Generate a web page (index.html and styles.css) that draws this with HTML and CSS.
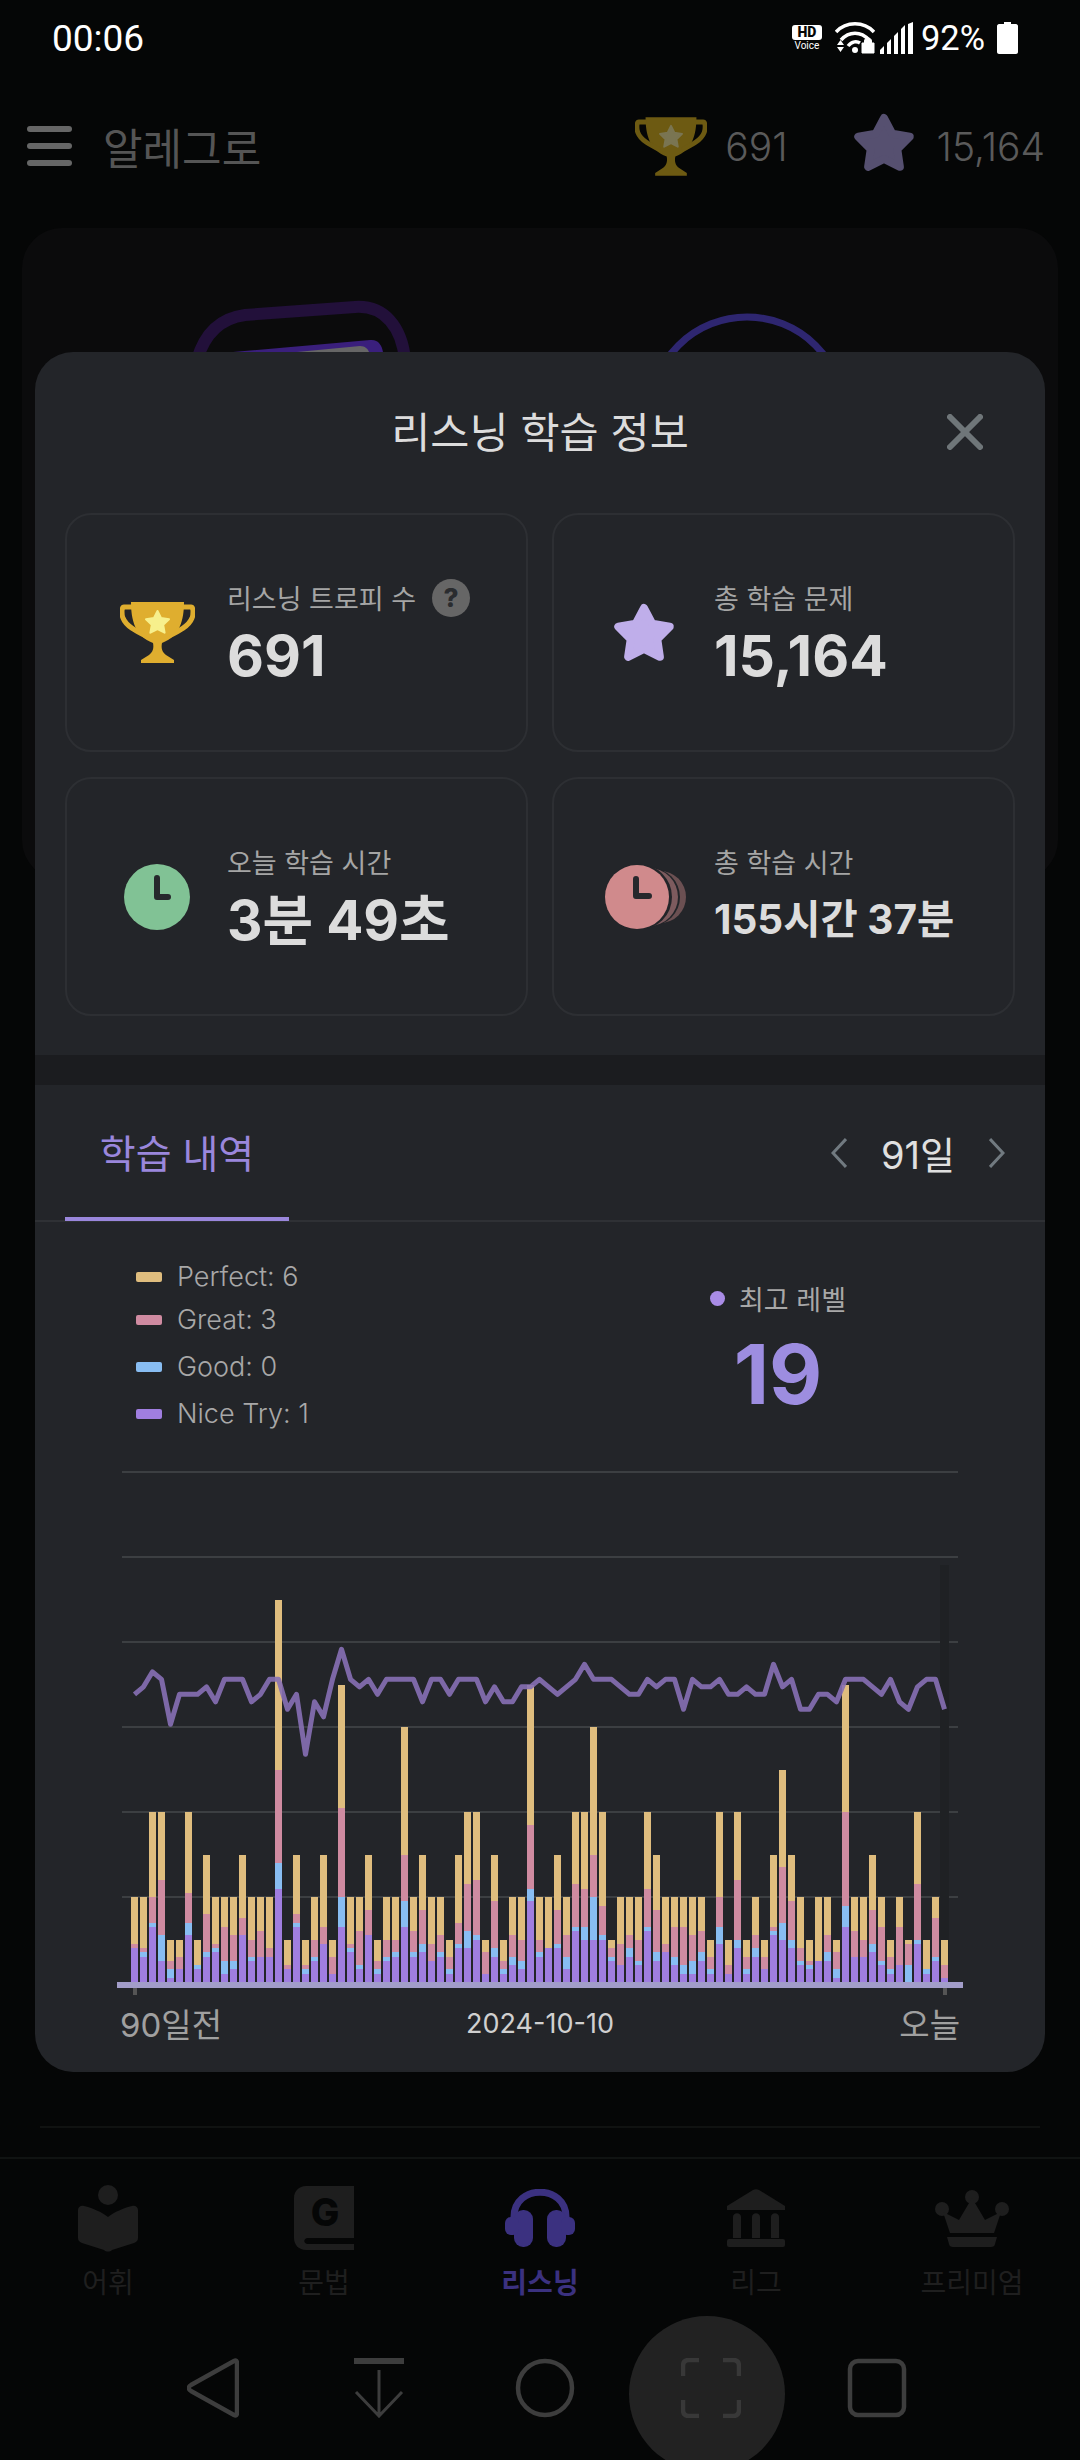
FILE: index.html
```html
<!DOCTYPE html>
<html lang="ko">
<head>
  <meta charset="UTF-8">
  <title>알레그로</title>
  <link rel="stylesheet" href="styles.css">
</head>
<body>
  <svg class="defs">
    <symbol id="trophy" viewBox="0 0 75 61">
      <path class="cup" d="M11 0H64C64 18 60 34 42 41C41 46 42 50 46 53L54 58V61H21V58L29 53C33 50 34 46 33 41C15 34 11 18 11 0Z"/>
      <path class="cup-handle" d="M12 5H4C1 5 2 14 3 16C6 24 16 29 26 34M63 5H71C74 5 73 14 72 16C69 24 59 29 49 34"/>
      <polygon class="cup-star" points="37.5,9 41,16 49,17.300 43.200,22.900 44.600,30.700 37.5,27 30.400,30.700 31.800,22.900 26,17.300 34,16"/>
    </symbol>
    <symbol id="star" viewBox="0 0 64 62">
      <polygon points="32,6 40.2,21.7 57.7,24.7 45.3,37.3 47.9,54.8 32,47 16.1,54.8 18.700,37.3 6.3,24.7 23.8,21.700"/>
    </symbol>
  </svg>

  <div class="page">
    <div class="status-bar">
      <span class="clock">00:06</span>
      <div class="status-icons">
        <div class="hd">
          <span class="hd-box">HD</span>
          <span class="hd-voice">Voice</span>
        </div>
        <svg class="wifi" width="40" height="32" viewBox="0 0 40 32">
          <path d="M1 10C11 -1 29 -1 39 10M6 18C14 9 26 9 34 18M13 24C17 19 22 19 25 21" fill="none" stroke="#fff" stroke-width="3.500"/>
          <circle cx="20" cy="28" r="3" fill="#fff"/>
          <path d="M2 23L5.500 18L9 23ZM2 25H9L5.500 30Z" fill="#fff"/>
          <path d="M27 21H39V31H27ZM29.500 21V19C29.500 15 36.500 15 36.500 19V21" fill="#fff" stroke="#fff"/>
        </svg>
        <svg class="signal" width="33" height="32" viewBox="0 0 33 32">
          <path d="M0 32V28L4 24V32ZM7 32V21L11 17V32ZM14 32V14L18 10V32ZM21 32V7L25 3V32ZM28 32V2L33 0V32Z" fill="#fff"/>
        </svg>
        <span class="battery-text">92%</span>
        <svg class="battery" width="21" height="32" viewBox="0 0 21 32">
          <path d="M7 0H14V2H19C20 2 21 3 21 4V30C21 31 20 32 19 32H2C1 32 0 31 0 30V4C0 3 1 2 2 2H7Z" fill="#fff"/>
        </svg>
      </div>
    </div>

    <div class="app-header">
      <div class="menu-icon"><span></span><span></span><span></span></div>
      <span class="app-title">알레그로</span>
      <svg class="head-trophy"><use href="#trophy"/></svg>
      <span class="head-num">691</span>
      <svg class="head-star"><use href="#star"/></svg>
      <span class="head-num">15,164</span>
    </div>

    <div class="back-card">
      <svg width="1036" height="652" viewBox="22 228 1036 652">
        <path d="M197 360C205 332 222 318 245 315L355 307C385 305 402 328 405 360" fill="none" stroke="#22103a" stroke-width="12"/>
        <path d="M233 352L370 340C378 339 382 345 383 352Z" fill="#3a1f7c"/>
        <path d="M297 352L360 346C365 346 368 349 369 352Z" fill="#666"/>
        <circle cx="747" cy="414" r="97" fill="none" stroke="#2e2670" stroke-width="7"/>
      </svg>
    </div>

    <div class="spacer"></div>
    <div class="back-line"></div>

    <div class="tab-bar">
      <div class="tab-item">
        <div class="tab-icon">
          <svg width="60" height="67" viewBox="0 0 60 67">
            <circle cx="30" cy="10" r="10"/>
            <path d="M0 25C0 22 3 20 6 21C14 23 24 27 30 32C36 27 46 23 54 21C57 20 60 22 60 25V53C60 56 58 57 56 58L34 65C32 67 28 67 26 65L4 58C2 57 0 56 0 53Z"/>
          </svg>
        </div>
        <span>어휘</span>
      </div>
      <div class="tab-item">
        <div class="tab-icon">
          <svg width="60" height="64" viewBox="0 0 60 64">
            <path d="M12 0H60V52H14C9 52 9 58 14 58H60V64H12C5 64 0 59 0 52V12C0 5 5 0 12 0Z"/>
            <text class="book-letter" x="31" y="40">G</text>
          </svg>
        </div>
        <span>문법</span>
      </div>
      <div class="tab-item active">
        <div class="tab-icon">
          <svg width="70" height="58" viewBox="0 0 70 58">
            <path class="phone-band" d="M9 36V28C9 -5 61 -5 61 28V36"/>
            <rect x="9" y="21" width="19" height="37" rx="9"/>
            <rect x="0" y="28" width="14" height="18" rx="6"/>
            <rect x="42" y="21" width="19" height="37" rx="9"/>
            <rect x="56" y="28" width="14" height="18" rx="6"/>
          </svg>
        </div>
        <span>리스닝</span>
      </div>
      <div class="tab-item">
        <div class="tab-icon">
          <svg width="58" height="58" viewBox="0 0 58 58">
            <path d="M26 1C28 0 30 0 32 1L58 17V21H0V17Z"/>
            <path d="M6 49V28C6 23 14 23 14 28V49ZM25 49V28C25 23 33 23 33 28V49ZM44 49V28C44 23 52 23 52 28V49Z"/>
            <rect x="0" y="50" width="58" height="8" rx="2"/>
          </svg>
        </div>
        <span>리그</span>
      </div>
      <div class="tab-item">
        <div class="tab-icon">
          <svg width="74" height="57" viewBox="0 0 74 57">
            <circle cx="7" cy="19" r="7"/>
            <circle cx="37" cy="7" r="7"/>
            <circle cx="67" cy="19" r="7"/>
            <path d="M8 22L24 30L37 8L50 30L66 22L59 43H15Z"/>
            <path d="M12 47H62L60 54C60 56 58 57 56 57H18C16 57 14 56 14 54Z"/>
          </svg>
        </div>
        <span>프리미엄</span>
      </div>
    </div>

    <div class="sys-nav">
      <div class="sys-btn">
        <svg width="52" height="60" viewBox="0 0 52 60">
          <path d="M47 3C49 2 50 3 50 5V55C50 57 49 58 47 57L4 33C1 31 1 29 4 27Z"/>
        </svg>
      </div>
      <div class="sys-btn">
        <svg width="50" height="60" viewBox="0 0 50 60">
          <path class="thick" d="M0 3H50"/>
          <path class="thin" d="M25 12V58M2 34L25 58L48 34"/>
        </svg>
      </div>
      <div class="sys-btn">
        <svg width="60" height="60" viewBox="0 0 60 60">
          <circle cx="30" cy="30" r="27"/>
        </svg>
      </div>
      <div class="sys-btn capture">
        <div class="capture-bg"></div>
        <svg width="60" height="60" viewBox="0 0 60 60">
          <path d="M18 2H8C4 2 2 4 2 8V18M42 2H52C56 2 58 4 58 8V18M18 58H8C4 58 2 56 2 52V42M42 58H52C56 58 58 56 58 52V42"/>
        </svg>
      </div>
      <div class="sys-btn">
        <svg width="60" height="60" viewBox="0 0 60 60">
          <rect x="3" y="3" width="54" height="54" rx="8"/>
        </svg>
      </div>
    </div>

    <div class="modal">
      <div class="modal-head">
        <span class="modal-title">리스닝 학습 정보</span>
        <svg class="modal-close" width="36" height="36" viewBox="0 0 36 36">
          <path d="M3 3L33 33M33 3L3 33"/>
        </svg>
      </div>

      <div class="stat-grid">
        <div class="stat-card">
          <div class="stat-icon"><svg class="card-trophy"><use href="#trophy"/></svg></div>
          <div class="stat-text">
            <div class="stat-label">리스닝 트로피 수<span class="help">?</span></div>
            <div class="stat-value">691</div>
          </div>
        </div>
        <div class="stat-card">
          <div class="stat-icon"><svg class="card-star"><use href="#star"/></svg></div>
          <div class="stat-text">
            <div class="stat-label">총 학습 문제</div>
            <div class="stat-value">15,164</div>
          </div>
        </div>
        <div class="stat-card">
          <div class="stat-icon">
            <svg width="66" height="66" viewBox="0 0 66 66">
              <circle cx="33" cy="33" r="33" fill="#81c295"/>
              <path class="clock-hand" d="M33 14V33H44"/>
            </svg>
          </div>
          <div class="stat-text">
            <div class="stat-label">오늘 학습 시간</div>
            <div class="stat-value mid">3분 49초</div>
          </div>
        </div>
        <div class="stat-card">
          <div class="stat-icon">
            <svg class="clock-stack" width="82" height="64" viewBox="0 0 82 64">
              <circle cx="55" cy="32" r="26" fill="#6b5052"/>
              <circle cx="46" cy="32" r="29" fill="#232529"/>
              <circle cx="44" cy="32" r="29" fill="#7d5b5e"/>
              <circle cx="34" cy="32" r="33" fill="#232529"/>
              <circle cx="32" cy="32" r="32" fill="#d08a8c"/>
              <path class="clock-hand" d="M31 14V31H44"/>
            </svg>
          </div>
          <div class="stat-text">
            <div class="stat-label">총 학습 시간</div>
            <div class="stat-value small">155시간 37분</div>
          </div>
        </div>
      </div>

      <div class="band"></div>

      <div class="tabs">
        <div class="tab-title">학습 내역</div>
        <div class="pager">
          <svg width="16" height="30" viewBox="0 0 16 30"><path d="M15 1L2 15L15 29"/></svg>
          <span>91일</span>
          <svg width="16" height="30" viewBox="0 0 16 30"><path d="M1 1L14 15L1 29"/></svg>
        </div>
      </div>

      <div class="stats">
        <div class="legend">
          <div class="legend-row"><i class="swatch perfect"></i>Perfect: 6</div>
          <div class="legend-row"><i class="swatch great"></i>Great: 3</div>
          <div class="legend-row"><i class="swatch good"></i>Good: 0</div>
          <div class="legend-row"><i class="swatch nice"></i>Nice Try: 1</div>
        </div>
        <div class="best">
          <div class="best-label"><i class="best-dot"></i>최고 레벨</div>
          <div class="best-value">19</div>
        </div>
      </div>

      <svg id="chart" class="chart" width="1010" height="545" viewBox="35 1460 1010 545"></svg>

      <div class="axis">
        <span class="axis-side">90일전</span>
        <span class="axis-date">2024-10-10</span>
        <span class="axis-side right">오늘</span>
      </div>
    </div>
  </div>

  <script src="chart.js"></script>
</body>
</html>
```

FILE: styles.css
```css
* {
  box-sizing: border-box;
}

body {
  margin: 0;
  width: 1080px;
  height: 2460px;
  overflow: hidden;
  background: #050606;
  font-family: Inter, "Noto Sans CJK KR", sans-serif;
}

.defs {
  display: none;
}

.page {
  position: relative;
  width: 1080px;
  height: 2460px;
  overflow: hidden;
  display: flex;
  flex-direction: column;
}

/* status bar */
.status-bar {
  height: 76px;
  flex: none;
  display: flex;
  align-items: center;
  justify-content: space-between;
  padding: 0 62px 0 52px;
  color: #fff;
  font-family: Roboto, sans-serif;
}

.clock {
  font-size: 37px;
}

.status-icons {
  display: flex;
  align-items: center;
}

.hd {
  width: 30px;
  margin-right: 13px;
  display: flex;
  flex-direction: column;
  align-items: center;
}

.hd-box {
  width: 30px;
  height: 15px;
  background: #fff;
  border-radius: 3px;
  color: #050606;
  font-size: 14px;
  line-height: 15px;
  font-weight: 900;
  text-align: center;
}

.hd-voice {
  font-size: 10px;
  line-height: 12px;
}

.wifi {
  margin-right: 5px;
}

.battery-text {
  font-size: 34.5px;
  margin: 0 12px 0 8px;
}

/* header behind the dialog */
.app-header {
  height: 140px;
  flex: none;
  display: flex;
  align-items: center;
  padding: 0 35px 0 27px;
  color: #5a5a5a;
}

.menu-icon {
  width: 45px;
  display: flex;
  flex-direction: column;
  gap: 11px;
  margin-right: 31px;
}

.menu-icon span {
  height: 6px;
  border-radius: 3px;
  background: #666;
}

.app-title {
  font-size: 43px;
  margin-right: auto;
  color: #555;
}

.head-trophy {
  width: 72px;
  height: 59px;
  margin-right: 18px;
  --cup: #6d5a12;
  --cup-star: #7a7552;
}

.head-star {
  width: 64px;
  height: 62px;
  margin: -6px 21px 0 64px;
  fill: #565070;
  stroke: #565070;
  stroke-width: 8;
  stroke-linejoin: round;
}

.head-num {
  font-size: 39px;
  font-weight: 300;
}

.cup {
  fill: var(--cup);
}

.cup-handle {
  fill: none;
  stroke: var(--cup);
  stroke-width: 5;
}

.cup-star {
  fill: var(--cup-star);
  stroke: var(--cup-star);
  stroke-width: 2;
  stroke-linejoin: round;
}

.back-card {
  height: 652px;
  flex: none;
  margin: 12px 22px 0;
  background: #0b0b0c;
  border-radius: 40px;
  overflow: hidden;
}

.back-card svg {
  display: block;
}

.spacer {
  flex: 1;
}

.back-line {
  height: 2px;
  flex: none;
  margin: 0 40px 29px;
  background: #101211;
}

/* bottom tabs */
.tab-bar {
  height: 201px;
  flex: none;
  display: grid;
  grid-template-columns: repeat(5, 216px);
  padding-top: 25px;
  border-top: 2px solid #101312;
}

.tab-item {
  display: flex;
  flex-direction: column;
  align-items: center;
  color: #1f1f1f;
  font-size: 28px;
  line-height: 40px;
  fill: #1e1e1e;
}

.tab-item.active {
  color: #3b3180;
  fill: #3b3180;
  font-weight: 700;
}

.tab-icon {
  height: 68px;
  margin-bottom: 11px;
  display: flex;
  align-items: center;
}

.book-letter {
  font-family: Inter, sans-serif;
  font-size: 38px;
  font-weight: 800;
  text-anchor: middle;
  fill: #050606;
}

.phone-band {
  fill: none;
  stroke: #3b3180;
  stroke-width: 7;
}

/* system navigation */
.sys-nav {
  height: 102px;
  flex: none;
  display: flex;
  justify-content: center;
  padding-left: 10px;
}

.sys-btn {
  position: relative;
  width: 166px;
  height: 60px;
  display: flex;
  justify-content: center;
}

.sys-btn svg {
  position: relative;
  fill: none;
  stroke: #3d3d3d;
  stroke-width: 4.5;
}

.sys-btn .thick {
  stroke-width: 6;
}

.sys-btn .thin {
  stroke-width: 3;
}

.capture svg {
  stroke: #383838;
}

.capture-bg {
  position: absolute;
  left: 1px;
  top: -42px;
  width: 156px;
  height: 156px;
  border-radius: 50%;
  background: #222;
}

/* dialog */
.modal {
  position: absolute;
  left: 35px;
  top: 352px;
  width: 1010px;
  height: 1720px;
  background: #232529;
  border-radius: 38px;
  overflow: hidden;
}

.modal-head {
  position: relative;
  height: 161px;
  padding-bottom: 7px;
  display: flex;
  align-items: center;
  justify-content: center;
}

.modal-title {
  font-size: 42.5px;
  color: #dcdcdc;
}

.modal-close {
  position: absolute;
  right: 62px;
  top: 62px;
  fill: none;
  stroke: #6f7679;
  stroke-width: 6;
  stroke-linecap: round;
}

.stat-grid {
  display: grid;
  grid-template-columns: 463px 463px;
  grid-auto-rows: 239px;
  column-gap: 24px;
  row-gap: 25px;
  padding: 0 30px;
}

.stat-card {
  display: flex;
  align-items: center;
  border: 2px solid #2d2f33;
  border-radius: 26px;
  padding-left: 24px;
}

.stat-icon {
  width: 132px;
  margin-right: 4px;
  display: flex;
  justify-content: center;
}

.card-trophy {
  width: 75px;
  height: 61px;
  --cup: #dfae2f;
  --cup-star: #f7f08c;
}

.card-star {
  width: 64px;
  height: 62px;
  fill: #bfaeea;
  stroke: #bfaeea;
  stroke-width: 8;
  stroke-linejoin: round;
}

.clock-hand {
  fill: none;
  stroke: #26282c;
  stroke-width: 6;
  stroke-linecap: round;
  stroke-linejoin: round;
}

.clock-stack {
  margin-left: 4px;
}

.stat-label {
  display: flex;
  align-items: center;
  height: 40px;
  font-size: 27px;
  color: #a5a5a5;
}

.help {
  width: 38px;
  height: 38px;
  margin-left: 16px;
  border-radius: 50%;
  background: #666;
  color: #2a2c2f;
  font-size: 26px;
  font-weight: 800;
  line-height: 38px;
  text-align: center;
}

.stat-value {
  height: 64px;
  margin-top: 6px;
  font-size: 57px;
  line-height: 64px;
  font-weight: 700;
  color: #dcdcdc;
  white-space: nowrap;
}

.stat-value.mid {
  font-size: 55px;
}

.stat-value.small {
  font-size: 40.5px;
}

.band {
  height: 30px;
  margin-top: 39px;
  background: #1b1c1f;
}

.tabs {
  position: relative;
  height: 137px;
  display: flex;
  align-items: center;
  border-bottom: 2px solid #2f3135;
}

.tab-title {
  width: 224px;
  height: 137px;
  margin-left: 30px;
  font-size: 39px;
  line-height: 139px;
  text-align: center;
  color: #9a87dc;
  border-bottom: 4px solid #9a87dc;
}

.pager {
  margin-left: auto;
  padding-right: 40px;
  display: flex;
  align-items: center;
  gap: 34px;
  font-size: 38px;
  color: #e0e0e0;
}

.pager svg {
  fill: none;
  stroke: #717a80;
  stroke-width: 3;
}

.stats {
  height: 238px;
  display: flex;
  padding: 31px 0 0 101px;
}

.legend {
  width: 574px;
}

.legend-row {
  height: 47px;
  display: flex;
  align-items: center;
  font-size: 27px;
  font-weight: 300;
  color: #a8a8a8;
}

.legend-row:first-child {
  margin-bottom: -4px;
}

.swatch {
  width: 26px;
  height: 10px;
  margin-right: 15px;
  border-radius: 2px;
}

.perfect {
  background: #dfbd7e;
}

.great {
  background: #cf8ba1;
}

.good {
  background: #88bdf2;
}

.nice {
  background: #a07ee0;
}

.best {
  width: 136px;
  padding-top: 25px;
  display: flex;
  flex-direction: column;
  align-items: center;
}

.best-label {
  height: 40px;
  display: flex;
  align-items: center;
  white-space: nowrap;
  font-size: 27px;
  color: #a8a8a8;
}

.best-dot {
  width: 15px;
  height: 15px;
  margin-right: 14px;
  border-radius: 50%;
  background: #a98ce6;
}

.best-value {
  margin-top: 12px;
  font-size: 82px;
  line-height: 90px;
  font-weight: 700;
  color: #9d8de0;
}

.chart {
  display: block;
}

.axis {
  display: grid;
  grid-template-columns: 1fr auto 1fr;
  align-items: center;
  height: 35px;
  margin-top: -6px;
  padding: 0 85px;
}

.axis-side {
  font-size: 33px;
  color: #a0a0a0;
}

.axis-side.right {
  text-align: right;
}

.axis-date {
  font-size: 27px;
  color: #d0d0d0;
}
```

FILE: chart.js
```js
// [nice try, good, great, perfect] per day
var days = [
  [8,0,1,11],[6,1,1,12],[13,1,6,20],[5,6,13,16],[1,2,2,5],[3,0,3,4],[11,3,7,19],[3,1,0,6],
  [6,1,9,14],[7,1,1,11],[2,3,8,7],[3,2,6,9],[11,0,4,15],[5,1,4,10],[6,0,6,8],[6,0,2,12],
  [22,6,22,40],[3,0,1,6],[13,1,2,14],[2,1,1,6],[5,1,4,10],[9,0,4,17],[2,0,4,4],[13,7,21,29],
  [7,1,1,11],[3,1,8,8],[11,0,6,13],[2,1,2,5],[5,1,4,10],[6,1,3,10],[13,6,11,30],[6,1,5,8],
  [7,2,8,13],[5,0,4,11],[6,1,4,9],[2,1,3,4],[8,1,5,16],[8,4,11,17],[10,1,13,16],[2,0,5,3],
  [6,2,11,11],[2,1,2,5],[4,2,5,9],[3,2,5,10],[19,3,15,33],[6,1,3,10],[8,0,0,12],[8,1,8,13],
  [3,3,5,9],[12,1,10,17],[10,3,9,18],[10,10,10,30],[10,1,7,22],[5,1,2,2],[4,0,5,11],[6,2,3,9],
  [4,1,5,10],[12,1,9,18],[5,2,10,13],[7,0,2,11],[4,2,7,7],[2,2,9,7],[2,3,6,9],[5,2,5,8],
  [2,1,3,4],[9,4,7,20],[2,0,2,6],[8,2,14,16],[2,1,3,4],[6,2,3,9],[3,0,3,4],[11,1,1,17],
  [10,4,13,23],[8,2,9,11],[4,1,3,12],[3,1,1,5],[5,0,0,15],[5,2,4,9],[1,2,4,3],[13,5,22,30],
  [6,0,6,8],[6,0,4,10],[7,2,8,13],[4,1,8,7],[2,1,3,4],[4,0,9,7],[0,4,5,1],[9,1,13,17],
  [2,1,0,7],[5,1,9,5],[1,0,3,6]
];

var levels = [
  13,14,16,15,9,13,13,13,14,12,15,15,15,12,13,15,15,11,13,5,12,10,15,19,15,14,15,13,15,15,15,15,12,15,15,13,
  15,15,15,12,14,12,12,14,14,15,14,13,14,15,17,15,15,15,14,13,13,15,14,15,15,11,15,14,14,15,13,13,14,13,13,17,
  14,15,11,11,13,13,12,15,15,15,14,13,15,12,11,14,15,15,11
];

var colors = ["#a07ee0", "#88bdf2", "#cf8ba1", "#dfbd7e"];
var baseY = 1982;
var unit = 4.25;
var out = "";

// grid lines
for (var g = 1; g <= 6; g++) {
  out += '<rect x="122" y="' + (baseY - g * 85 - 1) + '" width="836" height="2" fill="#3c3f42"/>';
}
out += '<rect x="940" y="1565" width="9" height="417" fill="#1f2124"/>';

// stacked bars
var points = [];
for (var i = 0; i < days.length; i++) {
  var x = 131 + i * 9;
  var sum = 0;
  for (var c = 0; c < 4; c++) {
    if (days[i][c] === 0) continue;
    var barBottom = Math.round(baseY - sum * unit);
    sum += days[i][c];
    var barTop = Math.round(baseY - sum * unit);
    out += '<rect x="' + x + '" y="' + barTop + '" width="7" height="' + (barBottom - barTop) + '" fill="' + colors[c] + '"/>';
  }
  points.push((x + 3.5) + "," + (1649.3 + (19 - levels[i]) * 7.5).toFixed(1));
}

// level line
out += '<polyline points="' + points.join(" ") + '" fill="none" stroke="#8770b5" stroke-opacity="0.9" stroke-width="5" stroke-linejoin="round"/>';

// axis
out += '<rect x="117" y="1982" width="846" height="6" fill="#a29dc9"/>';
out += '<rect x="133" y="1988" width="4" height="7" fill="#555"/>';
out += '<rect x="943" y="1988" width="4" height="7" fill="#555"/>';

document.getElementById("chart").innerHTML = out;
```
